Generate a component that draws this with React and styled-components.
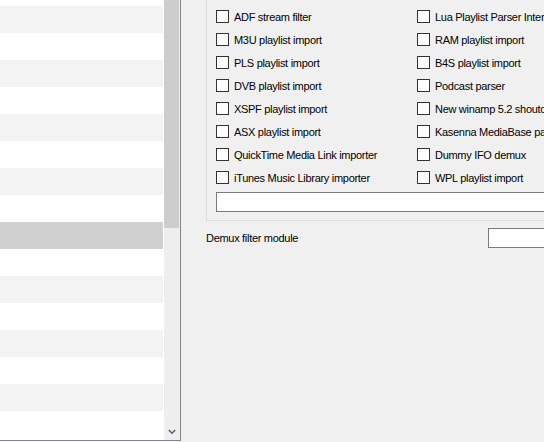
import React from "react";
import styled, { createGlobalStyle } from "styled-components";

const GlobalStyle = createGlobalStyle`
  html, body {
    margin: 0;
    padding: 0;
    background: #f0f0f0;
    overflow: hidden;
  }
  body {
    font-family: "Liberation Sans", Arial, sans-serif;
    font-size: 11px;
    letter-spacing: -0.3px;
    color: #000;
  }
`;

const Window = styled.div`
  display: flex;
  width: 544px;
  height: 442px;
  overflow: hidden;
  background: #f0f0f0;
`;

const ListBox = styled.div`
  display: flex;
  flex: none;
  width: 181px;
  height: 441px;
  box-sizing: border-box;
  background: #fff;
  border-right: 1px solid #828790;
  border-bottom: 1px solid #828790;
`;

const RowsViewport = styled.div`
  width: 163px;
  margin-right: 1px;
  overflow: hidden;
`;

const RowsTrack = styled.div`
  margin-top: -21px;
`;

const Row = styled.div`
  height: 27px;
  background: ${(p) => (p.$selected ? "#d0d0d0" : p.$odd ? "#f3f3f3" : "#ffffff")};
`;

const Scrollbar = styled.div`
  width: 16px;
  display: flex;
  flex-direction: column;
  background: #eeeeee;
`;

const Thumb = styled.div`
  width: 15px;
  height: 228px;
  background: #cdcdcd;
`;

const Track = styled.div`
  flex: 1;
`;

const ArrowButton = styled.div`
  height: 17px;
  display: flex;
  align-items: center;
  justify-content: center;
`;

const RightPane = styled.div`
  flex: 1;
  display: flex;
  flex-direction: column;
  padding-left: 25px;
  min-width: 0;
`;

const GroupBox = styled.div`
  width: 420px;
  flex: none;
  box-sizing: border-box;
  border-left: 1px solid #dcdcdc;
  border-bottom: 1px solid #dcdcdc;
  padding: 10px 0 8px 9px;
`;

const CheckGrid = styled.div`
  display: grid;
  grid-template-columns: 201px 201px;
  row-gap: 10px;
`;

const CheckItem = styled.label`
  display: flex;
  align-items: center;
  gap: 5px;
  height: 13px;
  white-space: nowrap;
`;

const Box = styled.span`
  flex: none;
  width: 13px;
  height: 13px;
  box-sizing: border-box;
  border: 1px solid #333;
  background: #fff;
`;

const TextField = styled.div`
  margin-top: 8px;
  height: 20px;
  box-sizing: border-box;
  border: 1px solid #7a7a7a;
  background: #fff;
`;

const FieldRow = styled.div`
  display: flex;
  align-items: center;
  margin-top: 7px;
  height: 20px;
`;

const FieldLabel = styled.span`
  width: 282px;
  flex: none;
`;

const Input = styled.div`
  width: 120px;
  flex: none;
  height: 20px;
  box-sizing: border-box;
  border: 1px solid #7a7a7a;
  background: #fff;
`;

const left = [
  "ADF stream filter",
  "M3U playlist import",
  "PLS playlist import",
  "DVB playlist import",
  "XSPF playlist import",
  "ASX playlist import",
  "QuickTime Media Link importer",
  "iTunes Music Library importer",
];
const right = [
  "Lua Playlist Parser Interface",
  "RAM playlist import",
  "B4S playlist import",
  "Podcast parser",
  "New winamp 5.2 shoutcast import",
  "Kasenna MediaBase parser",
  "Dummy IFO demux",
  "WPL playlist import",
];

export default function App() {
  const rows = Array.from({ length: 17 }, (_, i) => i);
  const items = [];
  left.forEach((l, i) => {
    items.push(l, right[i]);
  });
  return (
    <>
      <GlobalStyle />
      <Window>
        <ListBox>
          <RowsViewport>
            <RowsTrack>
              {rows.map((i) => (
                <Row key={i} $odd={i % 2 === 1} $selected={i === 9} />
              ))}
            </RowsTrack>
          </RowsViewport>
          <Scrollbar>
            <Thumb />
            <Track />
            <ArrowButton>
              <svg width="8" height="6" viewBox="0 0 8 6">
                <polyline
                  points="0.8,1 4,4.2 7.2,1"
                  fill="none"
                  stroke="#606060"
                  strokeWidth="1.6"
                />
              </svg>
            </ArrowButton>
          </Scrollbar>
        </ListBox>
        <RightPane>
          <GroupBox>
            <CheckGrid>
              {items.map((t, i) => (
                <CheckItem key={i}>
                  <Box />
                  <span>{t}</span>
                </CheckItem>
              ))}
            </CheckGrid>
            <TextField />
          </GroupBox>
          <FieldRow>
            <FieldLabel>Demux filter module</FieldLabel>
            <Input />
          </FieldRow>
        </RightPane>
      </Window>
    </>
  );
}
